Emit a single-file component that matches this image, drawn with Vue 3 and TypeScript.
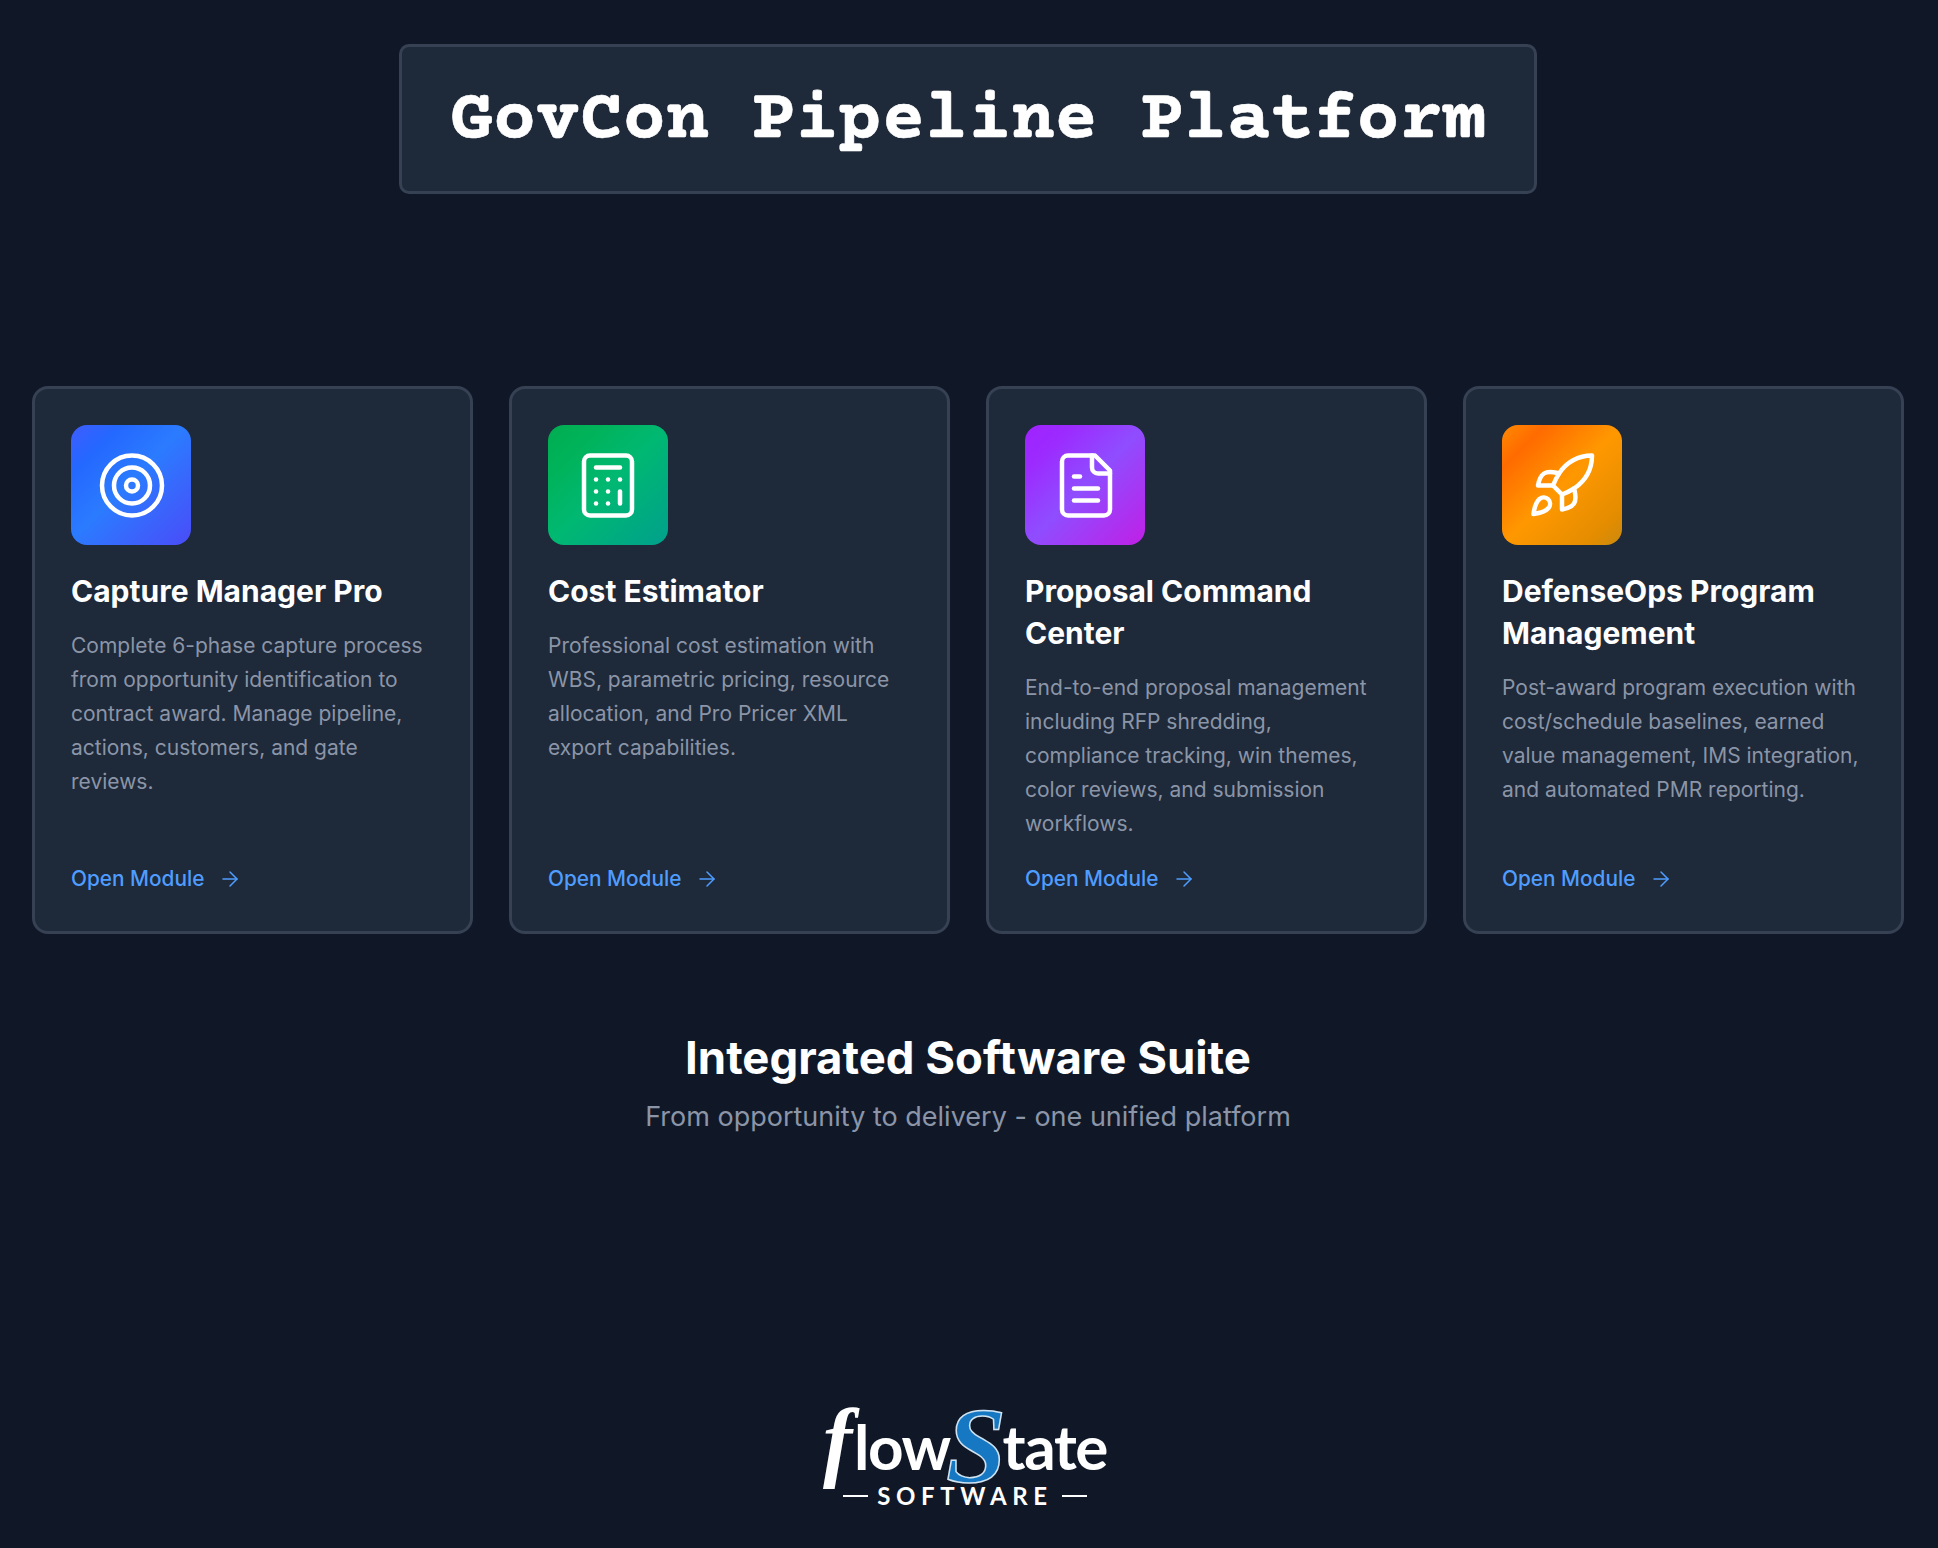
<script setup lang="ts">
interface Mod {
  title: string
  desc: string
  tone: string
  icon: string[]
}
const icons = {
  calc: ['M8 6h8', 'M16 14v4', 'M16 10h.01', 'M12 10h.01', 'M8 10h.01', 'M12 14h.01', 'M8 14h.01', 'M12 18h.01', 'M8 18h.01', 'M6 2h12a2 2 0 0 1 2 2v16a2 2 0 0 1-2 2H6a2 2 0 0 1-2-2V4a2 2 0 0 1 2-2z'],
  file: ['M15 2H6a2 2 0 0 0-2 2v16a2 2 0 0 0 2 2h12a2 2 0 0 0 2-2V7Z', 'M14 2v4a2 2 0 0 0 2 2h4', 'M10 9H8', 'M16 13H8', 'M16 17H8'],
  rocket: ['M4.5 16.5c-1.5 1.26-2 5-2 5s3.74-.5 5-2c.71-.84.7-2.13-.09-2.91a2.18 2.18 0 0 0-2.91-.09z', 'm12 15-3-3a22 22 0 0 1 2-3.95A12.88 12.88 0 0 1 22 2c0 2.72-.78 7.5-6 11a22.35 22.35 0 0 1-4 2z', 'M9 12H4s.55-3.03 2-4c1.62-1.08 5 0 5 0', 'M12 15v5s3.03-.55 4-2c1.08-1.62 0-5 0-5'],
  target: ['M22 12a10 10 0 1 1-20 0a10 10 0 1 1 20 0z', 'M18 12a6 6 0 1 1-12 0a6 6 0 1 1 12 0z', 'M14 12a2 2 0 1 1-4 0a2 2 0 1 1 4 0z']
}
const modules: Mod[] = [
  { title: 'Capture Manager Pro', desc: 'Complete 6-phase capture process from opportunity identification to contract award. Manage pipeline, actions, customers, and gate reviews.', tone: 'blue', icon: icons.target },
  { title: 'Cost Estimator', desc: 'Professional cost estimation with WBS, parametric pricing, resource allocation, and Pro Pricer XML export capabilities.', tone: 'green', icon: icons.calc },
  { title: 'Proposal Command Center', desc: 'End-to-end proposal management including RFP shredding, compliance tracking, win themes, color reviews, and submission workflows.', tone: 'purple', icon: icons.file },
  { title: 'DefenseOps Program Management', desc: 'Post-award program execution with cost/schedule baselines, earned value management, IMS integration, and automated PMR reporting.', tone: 'orange', icon: icons.rocket }
]
</script>

<template>
  <main class="page">
    <header class="banner"><h1>GovCon Pipeline Platform</h1></header>

    <section class="grid">
      <article v-for="m in modules" :key="m.title" class="card">
        <div class="tile" :class="m.tone">
          <svg viewBox="0 0 24 24" width="72" height="72" fill="none" stroke="#fff" stroke-width="1.5" stroke-linecap="round" stroke-linejoin="round">
            <path v-for="d in m.icon" :key="d" :d="d" />
          </svg>
        </div>
        <h2>{{ m.title }}</h2>
        <p>{{ m.desc }}</p>
        <a class="link">
          <span>Open Module</span>
          <svg viewBox="0 0 24 24" width="24" height="24" fill="none" stroke="currentColor" stroke-width="1.5" stroke-linecap="round" stroke-linejoin="round">
            <path d="M5 12h14" /><path d="m12 5 7 7-7 7" />
          </svg>
        </a>
      </article>
    </section>

    <section class="suite">
      <h3>Integrated Software Suite</h3>
      <p>From opportunity to delivery - one unified platform</p>
    </section>

    <footer class="logo">
      <div class="word"><span class="fl">f</span><span>low</span><span class="s">S</span><span>tate</span></div>
      <div class="sub"><i></i><span>SOFTWARE</span><i></i></div>
    </footer>
  </main>
</template>

<style>
html, body { margin: 0; background: #101828; }
</style>

<style scoped>
.page {
  box-sizing: border-box;
  height: 1548px;
  padding: 44px 34px 0 32px;
  display: flex;
  flex-direction: column;
  align-items: center;
  font-family: Inter, sans-serif;
  background: #101828;
  overflow: hidden;
}
.banner {
  background: #1e2939;
  border: 3px solid #364153;
  border-radius: 10px;
  padding: 34px 48px 29px;
}
h1 {
  margin: 0;
  font: 700 72px/81px "Courier Prime", "Liberation Mono", monospace;
  -webkit-text-stroke: 0.6px #fff;
  color: #fff;
  white-space: nowrap;
}
.grid {
  width: 100%;
  margin-top: 192px;
  display: grid;
  grid-template-columns: repeat(4, 1fr);
  gap: 36px;
}
.card {
  background: #1e2939;
  border: 3px solid #364153;
  border-radius: 16px;
  padding: 36px;
  display: flex;
  flex-direction: column;
  align-items: flex-start;
}
.tile {
  width: 120px;
  height: 120px;
  border-radius: 16px;
  display: flex;
  align-items: center;
  justify-content: center;
}
.tile svg { transform: translateY(0.5px); }
.blue svg, .purple svg { transform: translate(1px, 0.5px); }
.blue { background: linear-gradient(135deg, #3f5cff 0%, #2468ff 20%, #2b7bff 48%, #4a4cf8 100%); }
.green { background: linear-gradient(135deg, #00ad50 0%, #00b35a 22%, #00b872 50%, #00a08c 100%); }
.purple { background: linear-gradient(135deg, #a022ff 0%, #9c2bff 20%, #8f4dff 50%, #c01fe6 100%); }
.orange { background: linear-gradient(135deg, #ff8a00 0%, #ff6b00 18%, #ff9800 50%, #e48c00 85%, #c98a10 100%); }
h2 {
  margin: 25px 0 17px;
  font-size: 30px;
  font-weight: 700;
  line-height: 42px;
  color: #fff;
}
.card p {
  margin: 0 0 24px;
  font-size: 21px;
  line-height: 34px;
  color: #8b95a7;
}
.link {
  margin-top: auto;
  padding-bottom: 3px;
  display: flex;
  align-items: center;
  gap: 14px;
  font-size: 20.8px;
  font-weight: 500;
  line-height: 27px;
  color: #4f9dff;
}
.suite {
  margin-top: 94px;
  text-align: center;
}
h3 {
  margin: 0;
  font-size: 45.5px;
  font-weight: 700;
  line-height: 60px;
  color: #fff;
}
.suite p {
  margin: 9px 0 0;
  font-size: 27px;
  line-height: 40px;
  color: #8b95a7;
}
.logo {
  margin: 262px 6px 0 0;
  display: flex;
  flex-direction: column;
  align-items: center;
  color: #fff;
}
.word {
  display: flex;
  align-items: baseline;
  font: 700 62px/70px Lato, sans-serif;
  letter-spacing: -1.4px;
}
.fl {
  font: italic 700 88px/70px "Liberation Serif", serif;
  margin-right: 3px;
}
.s {
  font: italic 700 108px/70px "Liberation Serif", serif;
  color: #1678c2;
  -webkit-text-stroke: 1.5px #cfe3f2;
  margin: 0 -2px 0 -4px;
  transform: translateY(12px);
}
.sub {
  display: flex;
  align-items: center;
  gap: 9px;
  font: 700 24px/30px Lato, sans-serif;
  letter-spacing: 5.6px;
}
.sub i {
  width: 25px;
  height: 2px;
  background: #fff;
}
</style>
